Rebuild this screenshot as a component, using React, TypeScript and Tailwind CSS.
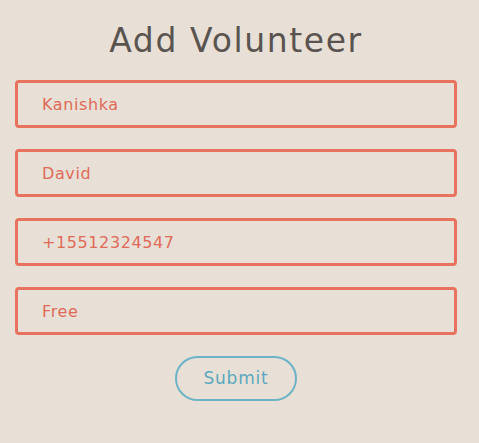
export default function App() {
  const fields = ["Kanishka", "David", "+15512324547", "Free"]
  return (
    <div className="min-h-[443px] w-full bg-[#e8e0d6] pl-[15px] pr-[22px] pt-[20px] font-['DejaVu_Sans',sans-serif]">
      <h1 className="text-center text-[33px] leading-[42px] tracking-[1.6px] text-[#5a5450]">Add Volunteer</h1>
      <form className="mt-[18px] flex flex-col gap-[21px]">
        {fields.map((f) => (
          <input
            key={f}
            defaultValue={f}
            className="h-[48px] w-full rounded-[4px] border-[3px] border-[#e7735f] bg-transparent px-[24px] text-[16px] tracking-[0.6px] text-[#e06a58] outline-none"
          />
        ))}
        <div className="flex justify-center">
          <button
            type="button"
            className="h-[45px] w-[122px] rounded-full border-[2.5px] border-[#6db3c7] text-[17px] tracking-[0.8px] text-[#5ba8bf]"
          >
            Submit
          </button>
        </div>
      </form>
    </div>
  )
}
